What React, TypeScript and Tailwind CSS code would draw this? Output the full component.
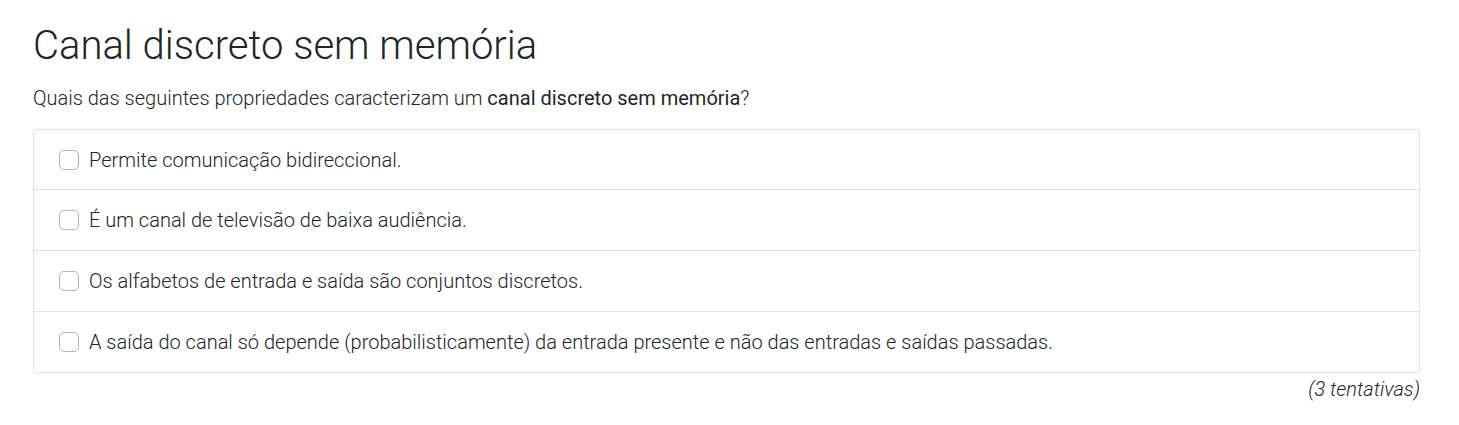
const options = [
  "Permite comunicação bidireccional.",
  "É um canal de televisão de baixa audiência.",
  "Os alfabetos de entrada e saída são conjuntos discretos.",
  "A saída do canal só depende (probabilisticamente) da entrada presente e não das entradas e saídas passadas.",
];

export default function App() {
  return (
    <div className="min-h-screen bg-white pl-[33px] pr-[39px] pt-[20px] font-['Roboto',sans-serif] font-light text-[#212529]">
      <h2 className="text-[40px] leading-[52px]">Canal discreto sem memória</h2>
      <p className="mt-[11px] text-[20px] leading-[30px]">
        Quais das seguintes propriedades caracterizam um{" "}
        <strong className="font-normal">canal discreto sem memória</strong>?
      </p>
      <div className="mt-[16px] rounded-[3px] border border-[#dee2e6]">
        {options.map((o, i) => (
          <label
            key={i}
            className={`flex items-center pl-[25px] text-[20px] ${i > 0 ? "h-[61px] border-t border-[#dee2e6]" : "h-[59px]"}`}
          >
            <span className="mr-[10px] h-[20px] w-[20px] shrink-0 rounded-[5px] border border-[#adb5bd] bg-white" />
            {o}
          </label>
        ))}
      </div>
      <div className="mt-[1px] pr-[-1px] text-right text-[20px] italic leading-[30px]">(3 tentativas)</div>
    </div>
  );
}
